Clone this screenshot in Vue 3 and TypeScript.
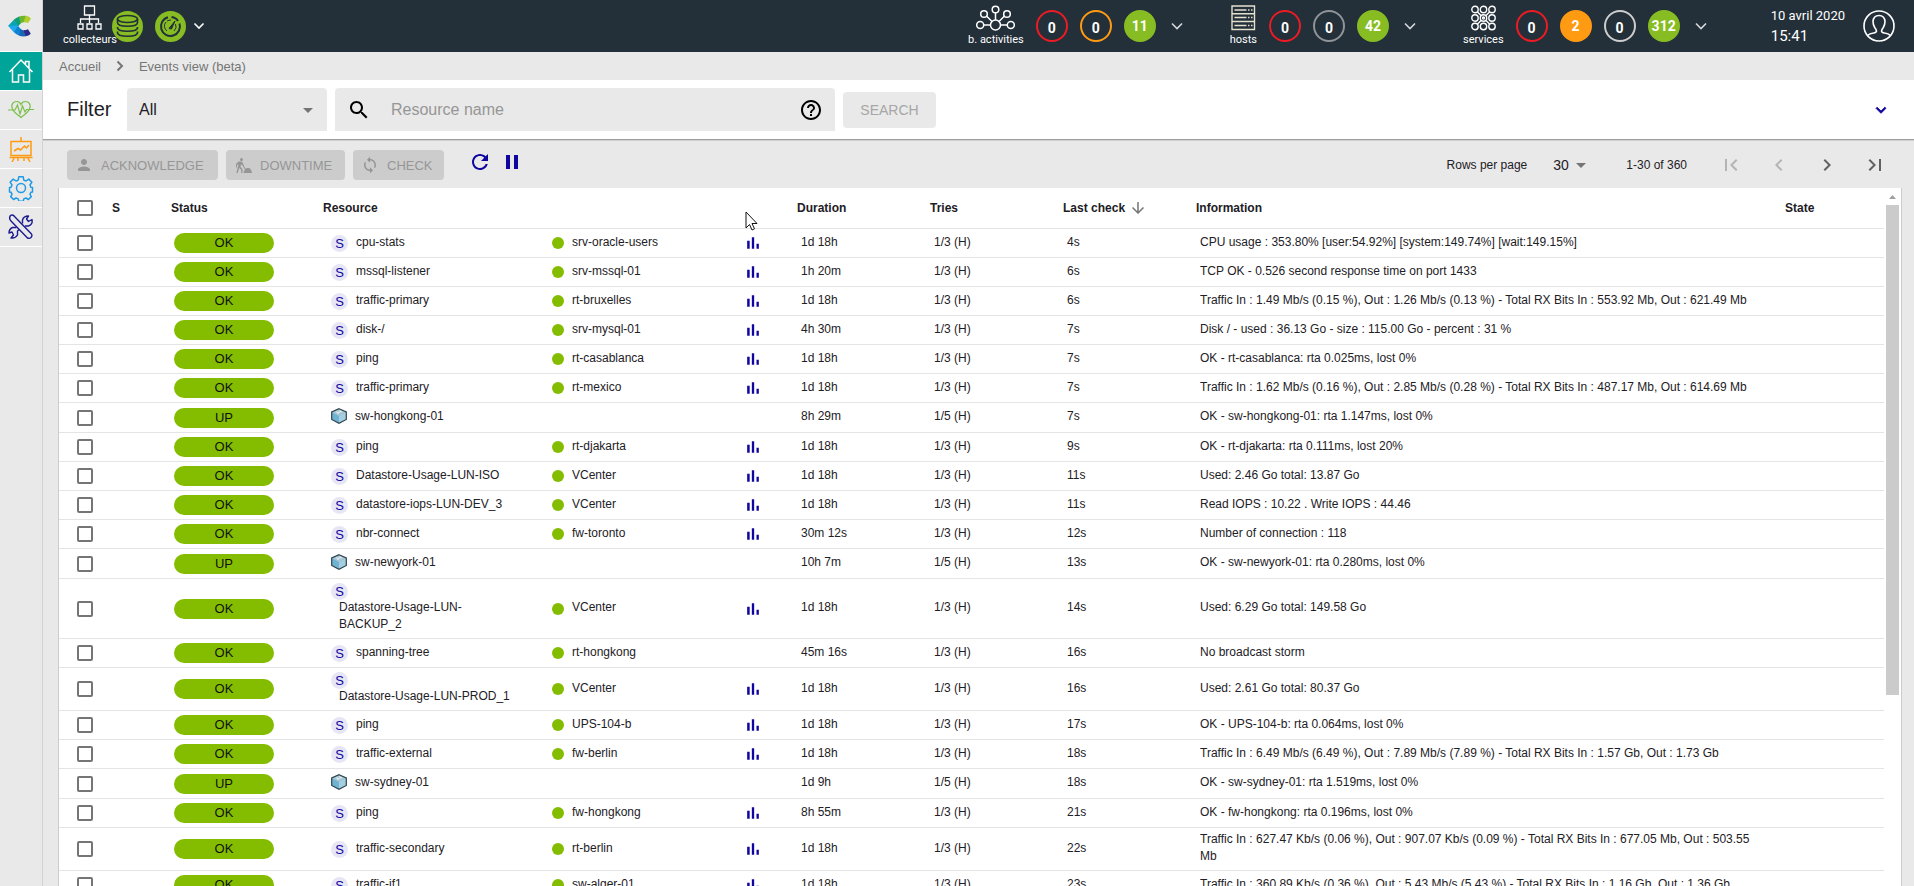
<script setup lang="ts">
import { ref } from 'vue'

type Row = {
  name: string
  parent?: string
  host?: boolean
  graph?: boolean
  duration: string
  tries: string
  last: string
  info: string
}

type Tone = 'red' | 'orange' | 'grey' | 'silver' | 'green-full' | 'orange-full'
type Group = { id: string; label: string; counts: { value: string; tone: Tone }[] }

const filter = ref('All')
const query = ref('')
const pageSize = ref('30')

const service = (name: string, parent: string, duration: string, last: string, info: string, graph = true): Row => ({
  name, parent, duration, last, info, graph, tries: '1/3 (H)',
})
const host = (name: string, duration: string, last: string, info: string): Row => ({
  name, duration, last, info, host: true, tries: '1/5 (H)',
})

const rows: Row[] = [
  service('cpu-stats', 'srv-oracle-users', '1d 18h', '4s', 'CPU usage : 353.80% [user:54.92%] [system:149.74%] [wait:149.15%]'),
  service('mssql-listener', 'srv-mssql-01', '1h 20m', '6s', 'TCP OK - 0.526 second response time on port 1433'),
  service('traffic-primary', 'rt-bruxelles', '1d 18h', '6s', 'Traffic In : 1.49 Mb/s (0.15 %), Out : 1.26 Mb/s (0.13 %) - Total RX Bits In : 553.92 Mb, Out : 621.49 Mb'),
  service('disk-/', 'srv-mysql-01', '4h 30m', '7s', 'Disk / - used : 36.13 Go - size : 115.00 Go - percent : 31 %'),
  service('ping', 'rt-casablanca', '1d 18h', '7s', 'OK - rt-casablanca: rta 0.025ms, lost 0%'),
  service('traffic-primary', 'rt-mexico', '1d 18h', '7s', 'Traffic In : 1.62 Mb/s (0.16 %), Out : 2.85 Mb/s (0.28 %) - Total RX Bits In : 487.17 Mb, Out : 614.69 Mb'),
  host('sw-hongkong-01', '8h 29m', '7s', 'OK - sw-hongkong-01: rta 1.147ms, lost 0%'),
  service('ping', 'rt-djakarta', '1d 18h', '9s', 'OK - rt-djakarta: rta 0.111ms, lost 20%'),
  service('Datastore-Usage-LUN-ISO', 'VCenter', '1d 18h', '11s', 'Used: 2.46 Go total: 13.87 Go'),
  service('datastore-iops-LUN-DEV_3', 'VCenter', '1d 18h', '11s', 'Read IOPS : 10.22 . Write IOPS : 44.46'),
  service('nbr-connect', 'fw-toronto', '30m 12s', '12s', 'Number of connection : 118'),
  host('sw-newyork-01', '10h 7m', '13s', 'OK - sw-newyork-01: rta 0.280ms, lost 0%'),
  service('Datastore-Usage-LUN-BACKUP_2', 'VCenter', '1d 18h', '14s', 'Used: 6.29 Go total: 149.58 Go'),
  service('spanning-tree', 'rt-hongkong', '45m 16s', '16s', 'No broadcast storm', false),
  service('Datastore-Usage-LUN-PROD_1', 'VCenter', '1d 18h', '16s', 'Used: 2.61 Go total: 80.37 Go'),
  service('ping', 'UPS-104-b', '1d 18h', '17s', 'OK - UPS-104-b: rta 0.064ms, lost 0%'),
  service('traffic-external', 'fw-berlin', '1d 18h', '18s', 'Traffic In : 6.49 Mb/s (6.49 %), Out : 7.89 Mb/s (7.89 %) - Total RX Bits In : 1.57 Gb, Out : 1.73 Gb'),
  host('sw-sydney-01', '1d 9h', '18s', 'OK - sw-sydney-01: rta 1.519ms, lost 0%'),
  service('ping', 'fw-hongkong', '8h 55m', '21s', 'OK - fw-hongkong: rta 0.196ms, lost 0%'),
  service('traffic-secondary', 'rt-berlin', '1d 18h', '22s', 'Traffic In : 627.47 Kb/s (0.06 %), Out : 907.07 Kb/s (0.09 %) - Total RX Bits In : 677.05 Mb, Out : 503.55 Mb'),
  service('traffic-if1', 'sw-alger-01', '1d 18h', '23s', 'Traffic In : 360.89 Kb/s (0.36 %), Out : 5.43 Mb/s (5.43 %) - Total RX Bits In : 1.16 Gb, Out : 1.36 Gb'),
]

const groups: Group[] = [
  { id: 'ba', label: 'b. activities', counts: [{ value: '0', tone: 'red' }, { value: '0', tone: 'orange' }, { value: '11', tone: 'green-full' }] },
  { id: 'hosts', label: 'hosts', counts: [{ value: '0', tone: 'red' }, { value: '0', tone: 'grey' }, { value: '42', tone: 'green-full' }] },
  { id: 'services', label: 'services', counts: [{ value: '0', tone: 'red' }, { value: '2', tone: 'orange-full' }, { value: '0', tone: 'silver' }, { value: '312', tone: 'green-full' }] },
]

const pagers = [
  { label: 'First page', off: true, d: 'M18.41 16.59L13.82 12l4.59-4.59L17 6l-6 6 6 6zM6 6h2v12H6z' },
  { label: 'Previous page', off: true, d: 'M15.41 7.41L14 6l-6 6 6 6 1.41-1.41L10.83 12z' },
  { label: 'Next page', off: false, d: 'M10 6L8.59 7.41 13.17 12l-4.58 4.59L10 18l6-6z' },
  { label: 'Last page', off: false, d: 'M5.59 7.41L10.18 12l-4.59 4.59L7 18l6-6-6-6zM16 6h2v12h-2z' },
]
</script>

<template>
  <div class="app">
    <nav class="side" aria-label="Main">
      <a class="logo" href="#" aria-label="Centreon">
        <svg width="23" height="22" viewBox="0 0 23 22">
          <path d="M17.500 .8Q21 1 23 3.500L20 8Q18 7 15.500 7.300z" fill="#b3cd2a" />
          <path d="M11 1.500Q14 .4 17.700 .8L15.700 7.300Q13.500 7.600 12 9z" fill="#6fb52b" />
          <path d="M5.500 5Q8 2.500 11.200 1.400L12.500 8.600 10 11.500z" fill="#0e9e78" />
          <path d="M0 11L5.600 4.900 10.300 11z" fill="#0aa3b5" />
          <path d="M0 10.800H10.200L5.800 17.200z" fill="#1fa8ec" />
          <path d="M5.700 17L10 10.800 12.500 14 11 20.600Q8 19.500 5.700 17z" fill="#0b84d8" />
          <path d="M10.800 20.500L12.200 13.500Q13.500 15.300 15.500 15.300L17.500 21.300Q14 21.800 10.800 20.500z" fill="#1668b3" />
          <path d="M15.300 15.300Q18 15.300 20 14.300L22.800 18.700Q21 20.800 17.300 21.300z" fill="#2b2a8f" />
        </svg>
      </a>
      <a class="item active" href="#" aria-label="Home">
        <svg width="26" height="26" viewBox="0 0 26 26" fill="none" stroke="#fff" stroke-width="1.500">
          <path d="M1.500 14L13 2l11.500 12M4.500 11.500V24h6v-7h5v7h6V11.500M17.500 6V3.500h3.500v7" />
        </svg>
      </a>
      <a class="item" href="#" aria-label="Monitoring">
        <svg width="26" height="26" viewBox="0 0 26 26" fill="none" stroke="#7cc04b" stroke-width="1.200">
          <path d="M4.500 12C2.500 7 5.500 4.500 8.500 4.500c2.500 0 4 1.500 4.500 3 .5-1.500 2-3 4.500-3 3 0 6 2.500 4 7.500-1.500 4-6 6-8.500 8.500-2.500-2.500-7-4.500-8.500-8.500z" />
          <path d="M0 13h7l2.500-5 2.500 9 2.500-8 2.500 6 1.500-2.500H26" />
        </svg>
      </a>
      <a class="item" href="#" aria-label="Reporting">
        <svg width="26" height="26" viewBox="0 0 26 26" fill="none" stroke="#ff9a13" stroke-width="1.500">
          <path d="M3 5.500h20v14H3zM13 1v4.500M1.500 21.500h23M6.500 21.500L4 26M19.500 21.500L22 26M10 21.500V25M16 21.500V25M6 15l4-2.500 2.500 1.500 4-4 2 2 2.500-3" />
        </svg>
      </a>
      <a class="item" href="#" aria-label="Configuration">
        <svg width="26" height="26" viewBox="0 0 26 26" fill="none" stroke="#1f9be5" stroke-width="1.500" stroke-linejoin="round">
          <circle cx="13" cy="13" r="4.500" />
          <path d="M10.800 1.800h4.400l.6 3.300 2.200.9 2.800-1.900 3.100 3.100-1.900 2.800.9 2.200 1.600.3v4.400l-1.600.3-.9 2.200 1.300 2.200-2.900 2.900-2.400-1.500-2.200.9-.6 2.300h-4.400l-.6-2.300-2.200-.9-2.400 1.500-2.900-2.900 1.300-2.200-.9-2.200-1.600-.3v-4.400l1.600-.3.9-2.200-1.900-2.800 3.100-3.100L8 6l2.200-.9z" />
        </svg>
      </a>
      <a class="item" href="#" aria-label="Administration">
        <svg width="26" height="26" viewBox="0 0 26 26" fill="none" stroke="#1b1b8f" stroke-width="1.400" stroke-linejoin="round">
          <path d="M2.500 1.500Q5 0 7 3l16.500 17q1 2-.5 3.500t-3.500.5L3 7Q.5 4.500 2.500 1.500z" />
          <path d="M14.500 9.500V6q1-4 6-4l-2 3 2 2.500 3.500-2q1 5-3.500 6.500h-3.500M11 15.500l-1.500 1.500v4q-2 3.500-6.500 3l2.500-3-1.500-3-3 1q0-4 3.500-5.500h4" />
        </svg>
      </a>
    </nav>

    <div class="page">
      <header class="top">
        <div class="poller">
          <div class="kind">
            <svg width="25" height="26" viewBox="0 0 25 26" fill="none" stroke="#fff" stroke-width="1.300">
              <path d="M7.500 1h10v9h-10zM12.500 10v8M3.500 18v-4h18v4M1 19h5v5H1zM10 19h5v5h-5zM19 19h5v5h-5z" />
            </svg>
            <span>collecteurs</span>
          </div>
          <svg class="disc first" width="31" height="31" viewBox="0 0 31 31" fill="none" stroke="#232f39" stroke-width="1.600">
            <circle cx="15.500" cy="15.500" r="15.500" fill="#87bd23" stroke="none" />
            <ellipse cx="15.500" cy="8" rx="10" ry="3.500" />
            <path d="M5.500 11.500c0 5 20 5 20 0M5.500 16.500c0 5 20 5 20 0M5.500 21.500c0 5 20 5 20 0M5.500 8v4M25.500 8v4M5.500 16v1.500M25.500 16v1.500M5.500 20.500v2M25.500 20.500v2" />
          </svg>
          <svg class="disc" width="31" height="31" viewBox="0 0 31 31" fill="none" stroke="#232f39" stroke-width="2">
            <circle cx="15.500" cy="15.500" r="15.500" fill="#87bd23" stroke="none" />
            <path d="M13 6.300A9.500 9.500 0 1 0 24.500 12.500M16.500 6q4.500.5 6.500 4" />
            <path d="M11 11a6 6 0 0 0 1 9M20.500 13a6 6 0 0 1-1.500 7M12 10q2-1 4-1" stroke-width="1" />
            <path d="M14 17.500L20 10l-3.500 8z" fill="#232f39" stroke-width="1" />
          </svg>
          <button class="more near" type="button" aria-label="Show pollers">
            <svg width="12" height="8" viewBox="0 0 12 8" fill="none" stroke="#fff" stroke-width="1.600"><path d="M1.500 1.500L6 6l4.500-4.500" /></svg>
          </button>
        </div>

        <div class="groups">
          <div v-for="g in groups" :key="g.id" class="group">
            <div class="kind">
              <svg v-if="g.id === 'ba'" width="39" height="26" viewBox="0 0 39 26" fill="none" stroke="#fff" stroke-width="1.500">
                <circle cx="19.500" cy="20" r="5" /><circle cx="19.500" cy="4.500" r="3.300" /><circle cx="8" cy="9" r="3.300" />
                <circle cx="31" cy="9" r="3.300" /><circle cx="4.200" cy="20" r="3.500" /><circle cx="34.800" cy="20" r="3.500" />
                <path d="M19.500 8v7M10.500 11l5.500 5.500M28.500 11L23 16.500M7.700 20h6.800M24.500 20h6.800" />
              </svg>
              <svg v-else-if="g.id === 'hosts'" width="25" height="26" viewBox="0 0 25 26" fill="none" stroke="#e6e0cf" stroke-width="1.400">
                <path d="M1 1h22.500v23.500H1zM1 8.700h22.500M1 16.500h22.500M3.500 5h12M3.500 12.500h12M3.500 20.500h12M17 5h1.500M20 5h1.500M17 12.500h1.500M20 12.500h1.500M17 20.500h1.500M20 20.500h1.500" />
              </svg>
              <svg v-else width="25" height="26" viewBox="0 0 25 26" fill="none" stroke="#fff" stroke-width="1.400">
                <circle v-for="n in 9" :key="n" :cx="4 + ((n - 1) % 3) * 8.500" :cy="4.500 + Math.floor((n - 1) / 3) * 8.500" r="3.200" />
                <path d="M6.500 7l3.500 3.500M18.500 7L15 10.500M6.500 19l3.500-3.500M18.500 19L15 15.500" />
                <circle cx="12.500" cy="13" r="1" />
              </svg>
              <span>{{ g.label }}</span>
            </div>
            <a v-for="(c, i) in g.counts" :key="i" class="count" :class="c.tone" href="#">{{ c.value }}</a>
            <button class="more" type="button" :aria-label="`Show ${g.label}`">
              <svg width="12" height="8" viewBox="0 0 12 8" fill="none" stroke="#d5d8da" stroke-width="1.600"><path d="M1 1.500L6 6.500l5-5" /></svg>
            </button>
          </div>
          <div class="clock"><span>10 avril 2020</span><span class="time">15:41</span></div>
          <button class="user" type="button" aria-label="Profile">
            <svg width="32" height="32" viewBox="0 0 32 32" fill="none" stroke="#fff" stroke-width="1.600">
              <circle cx="16" cy="16" r="15" />
              <path d="M4.500 25.500q2-2 6-2.500 3-.5 3-2-.2-1.500-1.800-3.500-1.700-3-1.700-6Q10.500 5.500 16 5.500t6 6q0 3-1.700 6-1.600 2-1.800 3.500 0 1.500 3 2 4 .5 6 2.500" />
            </svg>
          </button>
        </div>
      </header>

      <div class="crumbs">
        <a href="#">Accueil</a>
        <svg width="8" height="12" viewBox="0 0 8 12" fill="none" stroke="#757575" stroke-width="2"><path d="M1.500 1.500L6 6l-4.500 4.500" /></svg>
        <a href="#">Events view (beta)</a>
      </div>

      <form class="filters" @submit.prevent>
        <label class="title" for="filter">Filter</label>
        <div class="pick">
          <select id="filter" v-model="filter"><option>All</option></select>
          <svg class="drop" width="24" height="24" viewBox="0 0 24 24" fill="#757575"><path d="M7 10l5 5 5-5z" /></svg>
        </div>
        <div class="search">
          <svg width="24" height="24" viewBox="0 0 24 24"><path d="M15.500 14h-.79l-.28-.27C15.410 12.590 16 11.110 16 9.500 16 5.910 13.090 3 9.500 3S3 5.910 3 9.500 5.910 16 9.500 16c1.610 0 3.090-.59 4.230-1.570l.27.28v.79l5 4.990L20.490 19l-4.990-5zm-6 0C7.010 14 5 11.990 5 9.500S7.010 5 9.500 5 14 7.010 14 9.500 11.990 14 9.500 14z" /></svg>
          <input v-model="query" type="text" placeholder="Resource name" aria-label="Resource name">
          <svg width="24" height="24" viewBox="0 0 24 24"><path d="M11 18h2v-2h-2v2zm1-16C6.480 2 2 6.480 2 12s4.480 10 10 10 10-4.480 10-10S17.520 2 12 2zm0 18c-4.410 0-8-3.590-8-8s3.590-8 8-8 8 3.590 8 8-3.590 8-8 8zm0-14c-2.210 0-4 1.790-4 4h2c0-1.100.9-2 2-2s2 .9 2 2c0 2-3 1.750-3 5h2c0-2.250 3-2.500 3-5 0-2.210-1.790-4-4-4z" /></svg>
        </div>
        <button class="go" type="submit" disabled>SEARCH</button>
        <button class="unfold" type="button" aria-label="More filters">
          <svg width="20" height="20" viewBox="0 0 24 24" fill="#10069f" stroke="#10069f"><path d="M16.590 8.590L12 13.170 7.410 8.590 6 10l6 6 6-6z" /></svg>
        </button>
      </form>

      <div class="tools">
        <button class="act ack" type="button" disabled>
          <svg width="18" height="18" viewBox="0 0 24 24"><path d="M12 12c2.210 0 4-1.790 4-4s-1.790-4-4-4-4 1.790-4 4 1.790 4 4 4zm0 2c-2.670 0-8 1.340-8 4v2h16v-2c0-2.660-5.330-4-8-4z" /></svg>
          ACKNOWLEDGE
        </button>
        <button class="act down" type="button" disabled>
          <svg width="18" height="18" viewBox="0 0 18 18">
            <circle cx="7.500" cy="3.500" r="1.500" />
            <path d="M4.500 5.500h3L9.500 8v3.500L8.500 9 7 8.500l-.5 2.500 2 2v4H7.200v-3.200L5.200 12l-1.500 5H2.300l1.500-5.800.5-3L3 9v2.500H2V8z" />
            <path d="M8 6.500l5 9-.7.4-5-9z" />
            <path d="M9.500 17q1-4.500 3.500-5h2q2.300.8 3 5z" />
          </svg>
          DOWNTIME
        </button>
        <button class="act check" type="button" disabled>
          <svg width="18" height="18" viewBox="0 0 24 24"><path d="M12 4V1L8 5l4 4V6c3.310 0 6 2.690 6 6 0 1.010-.25 1.970-.7 2.800l1.460 1.460C19.540 15.030 20 13.570 20 12c0-4.420-3.580-8-8-8zm0 14c-3.310 0-6-2.690-6-6 0-1.010.25-1.970.7-2.800L5.240 7.740C4.460 8.970 4 10.430 4 12c0 4.420 3.580 8 8 8v3l4-4-4-4v3z" /></svg>
          CHECK
        </button>
        <button class="icon refresh" type="button" aria-label="Refresh">
          <svg width="24" height="24" viewBox="0 0 24 24"><path d="M17.650 6.350C16.200 4.900 14.210 4 12 4c-4.420 0-7.990 3.580-7.990 8s3.570 8 7.990 8c3.730 0 6.840-2.550 7.730-6h-2.080c-.82 2.330-3.040 4-5.650 4-3.310 0-6-2.690-6-6s2.690-6 6-6c1.660 0 3.140.69 4.220 1.780L13 11h7V4l-2.350 2.350z" /></svg>
        </button>
        <button class="icon" type="button" aria-label="Pause">
          <svg width="24" height="24" viewBox="0 0 24 24"><path d="M6 19h4V5H6v14zm8-14v14h4V5h-4z" /></svg>
        </button>
        <div class="pages">
          <label for="size">Rows per page</label>
          <div class="size">
            <select id="size" v-model="pageSize"><option>30</option></select>
            <svg class="drop" width="24" height="24" viewBox="0 0 24 24" fill="#757575"><path d="M7 10l5 5 5-5z" /></svg>
          </div>
          <span class="range">1-30 of 360</span>
          <button v-for="p in pagers" :key="p.label" class="turn" type="button" :disabled="p.off" :aria-label="p.label">
            <svg width="24" height="24" viewBox="0 0 24 24"><path :d="p.d" /></svg>
          </button>
        </div>
      </div>

      <main class="sheet">
        <div class="scroll">
          <table>
            <colgroup>
              <col class="c-box"><col class="c-s"><col class="c-status"><col class="c-res"><col class="c-parent"><col class="c-graph">
              <col class="c-num"><col class="c-num"><col class="c-num"><col><col class="c-state">
            </colgroup>
            <thead>
              <tr>
                <th class="box"><input type="checkbox" aria-label="Select all"></th>
                <th>S</th>
                <th>Status</th>
                <th colspan="3">Resource</th>
                <th>Duration</th>
                <th>Tries</th>
                <th>
                  <div class="sorted">
                    Last check
                    <svg width="18" height="18" viewBox="0 0 24 24" fill="#757575"><path d="M20 12l-1.410-1.410L13 16.170V4h-2v12.170l-5.580-5.590L4 12l8 8 8-8z" /></svg>
                  </div>
                </th>
                <th>Information</th>
                <th>State</th>
              </tr>
            </thead>
            <tbody>
              <tr v-for="(r, i) in rows" :key="i">
                <td class="box"><input type="checkbox" :aria-label="`Select ${r.name}`"></td>
                <td></td>
                <td class="status"><div class="pill">{{ r.host ? 'UP' : 'OK' }}</div></td>
                <td class="res">
                  <div class="resource" :class="{ host: r.host }">
                    <svg v-if="r.host" width="16" height="16" viewBox="0 0 16 16">
                      <path d="M8 .7L15.300 4v7.500L8 15.300.7 11.500V4z" fill="#6fb3d2" />
                      <path d="M8 .7L15.300 4 8 8 .7 4z" fill="#a9c6d3" />
                      <path d="M8 8l7.300-4v7.500L8 15.300z" fill="#a5cfe0" />
                      <path d="M5 3.500l3 1.700M8 2.500l3 1.700M6 5.500L10.500 3" stroke="#eef6fa" stroke-width=".8" />
                      <path d="M8 .7L15.300 4v7.500L8 15.300.7 11.500V4z" fill="none" stroke="#2f4450" stroke-width="1.200" />
                    </svg>
                    <span v-else class="chip">S</span>
                    <span class="name">{{ r.name }}</span>
                  </div>
                </td>
                <td class="parent"><div v-if="r.parent" class="owner"><i class="dot"></i><span class="name">{{ r.parent }}</span></div></td>
                <td class="graph">
                  <svg v-if="r.graph" width="20" height="20" viewBox="0 0 24 24" fill="#10069f"><path d="M5 9.200h3V19H5zM10.600 5h2.800v14h-2.800zM16.200 13H19v6h-2.800z" /></svg>
                </td>
                <td class="text">{{ r.duration }}</td>
                <td class="text">{{ r.tries }}</td>
                <td class="text">{{ r.last }}</td>
                <td class="text info">{{ r.info }}</td>
                <td></td>
              </tr>
            </tbody>
          </table>
        </div>
        <div class="bar" aria-hidden="true">
          <svg width="17" height="17" viewBox="0 0 17 17" fill="#a0a0a0"><path d="M5 11h7L8.500 7z" /></svg>
          <div class="track"><div class="thumb"></div></div>
        </div>
      </main>
    </div>

    <svg class="cursor" width="13" height="20" viewBox="0 0 13 20"><path d="M1 1v16l3.500-3.500L7 19l2.500-1.200L7 12.500h5z" fill="#fff" stroke="#111" /></svg>
  </div>
</template>

<style>
body {
  margin: 0;
  background: #e9e9e9;
  overflow: hidden;
}
</style>

<style scoped>
* {
  box-sizing: border-box;
}

.app {
  display: flex;
  height: 100vh;
  overflow: hidden;
  background: #e9e9e9;
  color: #1d2025;
  font-family: "Liberation Sans", Arial, sans-serif;
  font-size: 12px;
}

svg {
  display: block;
  flex: none;
}

button,
select,
input {
  font-family: inherit;
  margin: 0;
  padding: 0;
  border: 0;
  background: none;
  color: inherit;
}

a {
  color: inherit;
  text-decoration: none;
}

.side {
  flex: none;
  width: 43px;
  border-right: 1px solid #d2d2d2;
}

.logo,
.item {
  display: flex;
  align-items: center;
  justify-content: center;
  height: 39px;
  border-bottom: 1px solid #fff;
}

.logo {
  height: 52px;
  padding-right: 3px;
}

.item.active {
  background: #00a499;
}

.page {
  flex: 1;
  min-width: 0;
  display: flex;
  flex-direction: column;
}

.top {
  flex: none;
  display: flex;
  justify-content: space-between;
  height: 52px;
  padding: 0 19px 0 20px;
  background: #232f39;
  color: #fff;
  font-family: Roboto, sans-serif;
}

.poller,
.groups,
.group {
  display: flex;
  align-items: center;
}

.kind {
  display: flex;
  flex-direction: column;
  align-items: center;
  gap: 2px;
  font-size: 11px;
  line-height: 14px;
}

.disc {
  margin-right: 12px;
}

.disc.first {
  margin-left: -5px;
}

.group {
  gap: 12px;
  margin-right: 47px;
}

.group:nth-last-child(3) {
  margin-right: 64px;
}

.count {
  display: flex;
  align-items: center;
  justify-content: center;
  min-width: 32px;
  height: 32px;
  padding: 0 2px;
  border: 2px solid;
  border-radius: 16px;
  font-size: 14px;
  font-weight: 700;
}

.count.red,
.count.orange,
.count.grey,
.count.silver {
  padding-top: 4px;
}

.count.red { border-color: #ed1c24; }
.count.orange { border-color: #ff9a13; }
.count.grey { border-color: #8f9499; }
.count.silver { border-color: #cdcdcd; }
.count.green-full { border-color: #87bd23; background: #87bd23; }
.count.orange-full { border-color: #ff9a13; background: #ff9a13; }

.more {
  margin-left: 3px;
}

.more.near {
  margin-left: -5px;
}

.clock {
  display: flex;
  flex-direction: column;
  font-size: 13px;
  line-height: 20px;
  margin-right: 18px;
}

.clock .time {
  font-size: 15px;
}

.crumbs {
  flex: none;
  display: flex;
  align-items: center;
  gap: 15px;
  height: 28px;
  padding-left: 16px;
  color: #757575;
  font-size: 13px;
}

.filters {
  flex: none;
  display: flex;
  align-items: center;
  gap: 8px;
  height: 60px;
  padding: 0 23px 0 24px;
  background: #fff;
  border-bottom: 1px solid #a0a0a0;
  box-shadow: 0 1px 0 #cfcfcf;
}

.title {
  width: 52px;
  font-size: 20px;
}

.pick,
.size {
  display: flex;
  align-items: center;
  position: relative;
}

.pick select {
  width: 200px;
  height: 43px;
  padding-left: 12px;
  border-radius: 4px 4px 0 0;
  background: #e9e9e9;
  font-size: 16px;
  appearance: none;
}

.drop {
  position: absolute;
  right: 7px;
  pointer-events: none;
}

.search {
  display: flex;
  align-items: center;
  width: 500px;
  height: 43px;
  padding: 0 12px;
  border-radius: 4px 4px 0 0;
  background: #e9e9e9;
}

.search input {
  flex: 1;
  min-width: 0;
  margin-left: 20px;
  font-size: 16px;
  outline: none;
}

.search input::placeholder {
  color: #969696;
  opacity: 1;
}

.go {
  min-width: 93px;
  height: 36px;
  border-radius: 4px;
  background: #e9e9e9;
  color: #a6a6a6;
  font-size: 14px;
}

.unfold {
  margin-left: auto;
}

.tools {
  flex: none;
  display: flex;
  align-items: center;
  gap: 8px;
  height: 48px;
  padding: 2px 27px 0 24px;
}

.act {
  display: flex;
  align-items: center;
  gap: 8px;
  height: 30px;
  padding-left: 8px;
  border-radius: 4px;
  background: #ccc;
  color: #969696;
  fill: #969696;
  font-size: 13px;
}

.ack { min-width: 151px; }
.down { min-width: 119px; }
.check { min-width: 91px; }

.icon {
  height: 30px;
  padding-bottom: 6px;
  fill: #10069f;
}

.icon.refresh {
  margin-left: 16px;
}

.pages {
  display: flex;
  align-items: center;
  margin-left: auto;
}

.size {
  margin: 0 33px 0 26px;
}

.size select {
  width: 40px;
  height: 24px;
  font-size: 14px;
  appearance: none;
}

.size .drop {
  right: 0;
}

.range {
  margin-right: 32px;
}

.turn {
  margin-left: 24px;
  fill: #616161;
}

.turn:disabled {
  fill: #b4b4b4;
}

.range + .turn {
  margin-left: 0;
}

.sheet {
  flex: 1;
  min-height: 0;
  display: flex;
  margin: 0 12px 0 15px;
  border: solid #ccc;
  border-width: 0 1px;
  background: #fff;
}

.scroll {
  flex: 1;
  min-width: 0;
  overflow: hidden;
}

table {
  width: 100%;
  table-layout: fixed;
  border-collapse: separate;
  border-spacing: 0;
}

.c-box { width: 48px; }
.c-s { width: 59px; }
.c-status { width: 152px; }
.c-res { width: 228px; }
.c-parent { width: 190px; }
.c-graph { width: 56px; }
.c-num { width: 133px; }
.c-state { width: 104px; }

th,
td {
  padding: 4px 8px 4px 9px;
  border-bottom: 1px solid #e4e4e4;
  text-align: left;
  vertical-align: middle;
  line-height: 17px;
}

th {
  height: 41px;
  padding-left: 5px;
}

td.text {
  padding-top: 3px;
  padding-bottom: 5px;
}

td.info {
  padding-right: 24px;
}

.box {
  padding-left: 18px;
}

.box input {
  display: block;
  width: 16px;
  height: 16px;
  border: 2px solid #757575;
  border-radius: 2px;
  appearance: none;
}

.sorted {
  display: flex;
  align-items: center;
  gap: 4px;
}

td.status {
  padding-left: 8px;
}

.pill {
  width: 100px;
  height: 20px;
  border-radius: 10px;
  background: #84bd00;
  color: #111;
  font-size: 13px;
  line-height: 19px;
  text-align: center;
}

td.res {
  padding-left: 13px;
  padding-right: 25px;
}

.resource {
  display: flex;
  flex-wrap: wrap;
  align-items: center;
}

.resource.host {
  min-height: 21px;
}

.resource.host svg {
  margin-bottom: 4px;
}

.name {
  margin: -1px 0 1px 8px;
}

.chip {
  width: 17px;
  height: 17px;
  border-radius: 50%;
  background: #e7e6f5;
  color: #10069f;
  font-size: 13px;
  text-align: center;
}

td.parent {
  padding-left: 6px;
}

.owner {
  display: flex;
  align-items: center;
}

.dot {
  width: 12px;
  height: 12px;
  border-radius: 50%;
  background: #84bd00;
}

td.graph {
  padding: 4px 7px;
}

.bar {
  flex: none;
  display: flex;
  flex-direction: column;
  width: 17px;
}

.track {
  flex: 1;
  padding: 0 2px;
}

.thumb {
  height: 72%;
  background: #cbcbcb;
}

.cursor {
  position: absolute;
  left: 745px;
  top: 211px;
}
</style>
